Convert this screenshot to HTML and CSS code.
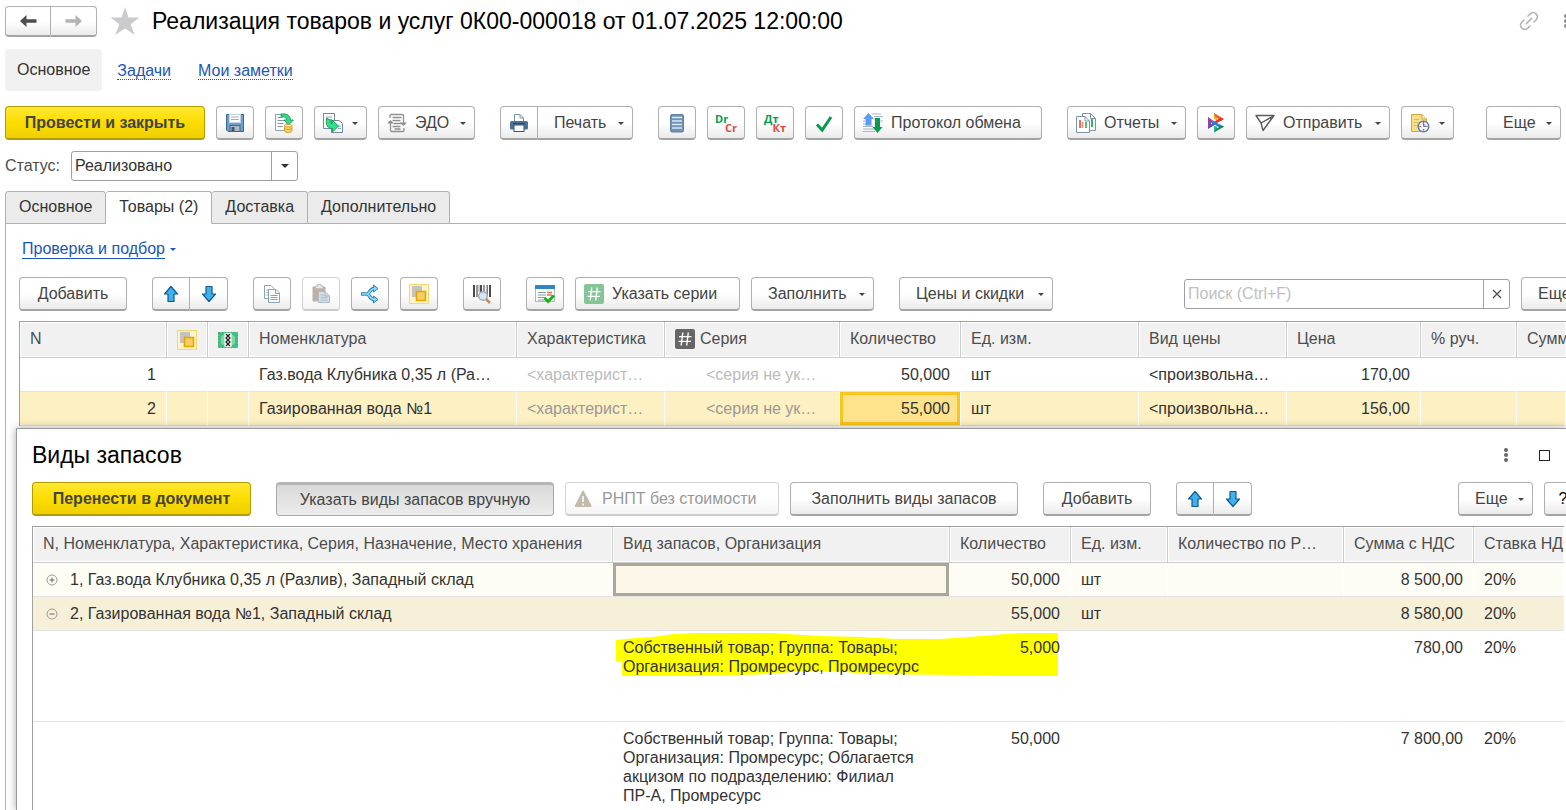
FILE: index.html
```html
<!DOCTYPE html>
<html lang="ru">
<head>
    <meta charset="UTF-8">
    <meta name="viewport" content="width=device-width, initial-scale=1.0">
    <title>Реализация товаров и услуг</title>
    <link rel="stylesheet" href="styles.css">
</head>
<body>
    <!-- shared icons -->
    <svg class="sprite" aria-hidden="true">
        <symbol id="i-up" viewBox="0 0 20 20">
            <path d="M10 2.5 L16.5 10 H13 V17.5 H7 V10 H3.5 Z" fill="#41b0ee" stroke="#0c5c94" stroke-width="1.2" stroke-linejoin="round"/>
        </symbol>
        <symbol id="i-down" viewBox="0 0 20 20">
            <path d="M10 17.5 L16.5 10 H13 V2.5 H7 V10 H3.5 Z" fill="#41b0ee" stroke="#0c5c94" stroke-width="1.2" stroke-linejoin="round"/>
        </symbol>
        <symbol id="i-stock" viewBox="0 0 20 20">
            <rect x=".5" y=".5" width="19" height="19" fill="#fff3c9" stroke="#f2d777"/>
            <path d="M3 2h10v5H8v6H3z" fill="#c3c3c3"/>
            <rect x="7.5" y="7.5" width="9" height="9" fill="#f7cd65" stroke="#e0a800" stroke-width="1.6"/>
        </symbol>
        <symbol id="i-hash" viewBox="0 0 20 20">
            <path d="M7.8 3.5 L6.2 16.5 M13.3 3.5 L11.7 16.5 M4 7.6 H16.5 M3.5 12.4 H16" fill="none" stroke="#fff" stroke-width="1.4"/>
        </symbol>
    </svg>

    <main class="page">
        <header class="title-bar">
            <div class="btn-group nav-group">
                <button class="btn" type="button" aria-label="Назад">
                    <svg width="18" height="14" viewBox="0 0 18 14"><path d="M7.5 1 L1 7 L7.5 13 V8.8 H17.5 V5.2 H7.5 Z" fill="#4d4d4d"/></svg>
                </button>
                <button class="btn" type="button" aria-label="Вперед">
                    <svg width="18" height="14" viewBox="0 0 18 14"><path d="M10.5 1 L17 7 L10.5 13 V8.8 H.5 V5.2 H10.5 Z" fill="#b3b3b3"/></svg>
                </button>
            </div>
            <button class="icon-btn star" type="button" aria-label="Избранное">
                <svg width="30" height="29" viewBox="0 0 30 29"><path d="M15 0 L18.5 10.5 H29.5 L20.7 17.2 L24.8 28 L15 21.4 L5.2 28 L9.3 17.2 L.5 10.5 H11.5 Z" fill="#cbcbcd"/></svg>
            </button>
            <h1>Реализация товаров и услуг 0К00-000018 от 01.07.2025 12:00:00</h1>
            <button class="icon-btn link-btn" type="button" aria-label="Ссылка">
                <svg width="20" height="20" viewBox="0 0 20 20" fill="none" stroke="#b5b5b5" stroke-width="1.600" stroke-linecap="round"><path d="M9 5 L11.5 2.6 A4.2 4.2 0 0 1 17.4 8.5 L15 11 M11 15 L8.500 17.4 A4.2 4.2 0 0 1 2.6 11.5 L5 9 M7.4 12.6 L12.6 7.4"/></svg>
            </button>
            <button class="icon-btn" type="button" aria-label="Меню">
                <svg width="6" height="16" viewBox="0 0 6 16" fill="#8a8a8a"><circle cx="3" cy="3" r="2"/><circle cx="3" cy="8" r="2"/><circle cx="3" cy="13" r="2"/></svg>
            </button>
        </header>

        <nav class="form-nav">
            <a class="current" href="#main">Основное</a>
            <a href="#tasks"><span>Задачи</span></a>
            <a href="#notes"><span>Мои заметки</span></a>
        </nav>

        <div class="toolbar">
            <button class="btn primary w-200" type="button">Провести и закрыть</button>
            <button class="btn icon" type="button" aria-label="Записать">
                <svg width="20" height="20" viewBox="0 0 20 20"><path d="M1.5 1.5 H18.5 V18.5 H3 L1.5 17 Z" fill="#6f9fd0" stroke="#3e6690"/><rect x="4.5" y="1.5" width="11" height="8" fill="#fff" stroke="#c2d4e6"/><path d="M6 4h8M6 6.500h8" stroke="#9fb0c0"/><rect x="5" y="12.500" width="10" height="6" fill="#aebac2" stroke="#4b6680"/><rect x="6.500" y="14" width="3" height="4" fill="#3e5a74"/></svg>
            </button>
            <button class="btn icon" type="button" aria-label="Провести">
                <svg width="20" height="20" viewBox="0 0 20 20"><path d="M1.500 1.500 H13 V17.500 H1.500 Z" fill="#fff" stroke="#8ba0b5"/><path d="M3.500 4.500h5M3.500 7.500h7M3.500 10.500h6M3.500 13.500h5" stroke="#7f97ad"/><path d="M7 1 C13 0 16.500 3 16.500 7 H19.500 L14.500 12 L10 7 H12.500 C12.500 4.500 10.500 3.500 7 3.800 Z" fill="#35d886" stroke="#139a58" stroke-width=".8"/><path d="M10.500 12.500 V18 C11 20 17.500 20 18 18 V12.500" fill="#f7d35c" stroke="#c9962a" stroke-width=".8"/><ellipse cx="14.200" cy="12.800" rx="3.800" ry="1.300" fill="#fde89a" stroke="#c9962a" stroke-width=".8"/><path d="M10.500 15.500 C12 17 16.500 17 18 15.500" fill="none" stroke="#c9962a" stroke-width=".8"/></svg>
            </button>
            <button class="btn with-icon w-53" type="button" aria-label="Создать на основании">
                <svg width="20" height="20" viewBox="0 0 20 20"><path d="M.5 .5 H11.500 V15.500 H.5 Z" fill="#fff" stroke="#71889e"/><path d="M3 4h6M3 6.500h6" stroke="#91a6b9"/><path d="M8.500 7.500 H16 L19.500 10.500 V19.500 H8.500 Z" fill="#fff" stroke="#71889e"/><path d="M15 13h3M15 15.500h3" stroke="#91a6b9"/><path d="M3.500 5 L7.500 7.500 C6.500 10 7.500 10.500 9 10.500 V7 L15.500 13 L9.500 19 V15.500 C4.500 15.500 2.500 12 3.500 5 Z" fill="#30e08a" stroke="#109455" stroke-width=".9"/></svg>
                <span class="caret"></span>
            </button>
            <button class="btn with-icon w-97" type="button">
                <svg width="20" height="20" viewBox="0 0 20 20" fill="none" stroke="#8f8f8f" stroke-width="1.300"><path d="M3 5 V2.500 Q3 1.500 4 1.500 H15 Q16.500 1.500 16.500 3 V10 M17 15 V17.500 Q17 18.500 16 18.500 H5 Q3.500 18.500 3.500 17 V10 M5.500 4.500h9M5.500 7.500h8M6.500 10.500h8M5.500 13.500h8M7.500 16h6"/><path d="M0 10.500 L3.500 7 L7 10.500 Z M13 9.500 L16.500 13 L20 9.500 Z" fill="#8f8f8f" stroke="none"/></svg>
                <span>ЭДО</span><span class="caret"></span>
            </button>

            <div class="btn-group gap-left">
                <button class="btn icon" type="button" aria-label="Печать">
                    <svg width="20" height="20" viewBox="0 0 20 20"><path d="M5.500 8 V1.500 H11 L14.500 5 V8" fill="#fff" stroke="#7b93ad"/><path d="M11 1.500 V5 H14.500" fill="none" stroke="#7b93ad"/><rect x="1" y="8" width="18" height="8.500" rx="1.500" fill="#4d7198"/><path d="M4 10.500 H16" stroke="#2c4866"/><rect x="5" y="12" width="10" height="6.500" fill="#fff" stroke="#345476"/></svg>
                </button>
                <button class="btn menu w-95" type="button"><span>Печать</span><span class="caret"></span></button>
            </div>

            <button class="btn icon gap-left" type="button" aria-label="Реестр">
                <svg width="20" height="20" viewBox="0 0 20 20"><rect x="3.500" y="1.500" width="13" height="17.500" rx="1.500" fill="#6f93b3" stroke="#5f82a0"/><path d="M5 4.500h10M5 8h10M5 11.500h10M5 15h10" stroke="#d7e7f3" stroke-width="1.600"/></svg>
            </button>
            <button class="btn icon" type="button" aria-label="Проводки">
                <span class="entry"><b>Dr</b><b>Cr</b></span>
            </button>
            <button class="btn icon" type="button" aria-label="Движения">
                <span class="entry"><b>Дт</b><b>Кт</b></span>
            </button>
            <button class="btn icon" type="button" aria-label="Проверить">
                <svg width="20" height="20" viewBox="0 0 20 20"><path d="M3 11.500 L8.200 17 L17 4" fill="none" stroke="#0a9a4c" stroke-width="3"/></svg>
            </button>
            <button class="btn with-icon w-188" type="button">
                <svg width="20" height="20" viewBox="0 0 20 20"><path d="M9 1h9M11 3.500h9M11 6h2M0 8h2M0 11h3M0 13.500h10M0 16h11M0 18.500h12M17 8h3" stroke="#a5b5c5"/><path d="M5.500 0 L11 6 H8.500 V12.500 H2.500 V6 H0 Z" fill="#5b9cf5"/><path d="M14.500 20 L9.500 14 H12 V5 H17 V14 H19.500 Z" fill="#0a9a4c"/></svg>
                <span>Протокол обмена</span>
            </button>

            <button class="btn with-icon w-119 gap-left" type="button">
                <svg width="20" height="20" viewBox="0 0 20 20"><path d="M6.500 .5 H14.500 L19.500 5.500 V17.500 H6.500 Z" fill="#f7fafc" stroke="#7d93a8"/><path d="M14.500 .5 V5.500 H19.500" fill="none" stroke="#7d93a8"/><path d="M16 6 V14" stroke="#36b26b" stroke-width="2"/><path d="M.5 3.500 H9 L13.500 8 V19.500 H.5 Z" fill="#fff" stroke="#7d93a8"/><path d="M9 3.500 V8 H13.500" fill="none" stroke="#7d93a8"/><path d="M4 7 V15" stroke="#e34a3a" stroke-width="1.600"/><path d="M6.500 9 V15" stroke="#f08b7d" stroke-width="1.600"/><path d="M10 9 V15" stroke="#2faa5c" stroke-width="1.600"/></svg>
                <span>Отчеты</span><span class="caret"></span>
            </button>
            <button class="btn icon" type="button" aria-label="Бизнес-сеть">
                <svg width="20" height="20" viewBox="0 0 20 20"><path d="M8 0 V5.500 L11 7.500 V4 Z" fill="#f5a623"/><path d="M8 0 L18 6 L15 8 L9 3 Z" fill="#ee5a2c"/><path d="M18 6 L9 11 L7 9.500 L14 5 Z" fill="#e8312f"/><path d="M2 4 V16 L5 13 V7 Z" fill="#8547a8"/><path d="M2 4 L9 9 L7 11 L3.500 8 Z" fill="#d5307e"/><path d="M2 16 L11 10.500 L9 8.500 L4 12 Z" fill="#5a4fc0"/><path d="M6 7.500 L18 13.500 L15 15.500 L6 10 Z" fill="#1f86d8"/><path d="M8 13 V19.500 L11 16.500 V13.500 Z" fill="#26b0a0"/><path d="M8 19.500 L18 13.500 L15 13 L10 16 Z" fill="#168c3c"/></svg>
            </button>
            <button class="btn with-icon w-144" type="button">
                <svg width="20" height="20" viewBox="0 0 20 20" fill="none" stroke="#5c5c5c" stroke-width="1.400" stroke-linejoin="round"><path d="M1 2.500 H19 L8 17.500 L6 10 Z M6 10 L18.500 3"/></svg>
                <span>Отправить</span><span class="caret"></span>
            </button>
            <button class="btn with-icon w-53" type="button" aria-label="Напоминание">
                <svg width="20" height="20" viewBox="0 0 20 20"><path d="M1.500 1.500 H12 L16.500 6 V18.500 H1.500 Z" fill="#f8df85" stroke="#cda84a"/><path d="M12 1.500 V6 H16.500" fill="#fff0ba" stroke="#cda84a"/><path d="M4 6.500h5M4 9.500h6M4 12.500h4" stroke="#dcb95c"/><circle cx="13.500" cy="13.500" r="5.300" fill="#fff" stroke="#5d83ad" stroke-width="1.500"/><path d="M13.500 9.500 V13.500 H16.500" fill="#9cb9d6" stroke="#5d83ad"/><path d="M13.500 17.500v-1.500M9.500 13.500h1.500M13.500 9v1M17.500 13.500h-1" stroke="#e34848" stroke-width="1.400"/></svg>
                <span class="caret"></span>
            </button>
            <button class="btn menu more" type="button"><span>Еще</span><span class="caret"></span></button>
        </div>

        <div class="status-row">
            <label for="status">Статус:</label>
            <div class="field status-field">
                <select id="status">
                    <option>Реализовано</option>
                </select>
                <span class="field-btn"><span class="caret"></span></span>
            </div>
        </div>

        <div class="tabs" role="tablist">
            <button type="button" role="tab">Основное</button>
            <button class="active" type="button" role="tab" aria-selected="true">Товары (2)</button>
            <button type="button" role="tab">Доставка</button>
            <button type="button" role="tab">Дополнительно</button>
        </div>

        <section class="tab-panel">
            <div class="check-row">
                <a href="#check">Проверка и подбор</a><span class="caret"></span>
            </div>

            <div class="toolbar">
                <button class="btn w-108" type="button">Добавить</button>
                <div class="btn-group gap-left">
                    <button class="btn icon" type="button" aria-label="Вверх"><svg width="20" height="20"><use href="#i-up"/></svg></button>
                    <button class="btn icon" type="button" aria-label="Вниз"><svg width="20" height="20"><use href="#i-down"/></svg></button>
                </div>
                <button class="btn icon gap-left" type="button" aria-label="Копировать">
                    <svg width="20" height="20" viewBox="0 0 20 20" stroke="#86a5b8"><path d="M2.500 1.500 H9 L12 4.500 V14.500 H2.500 Z" fill="#fff"/><path d="M4.500 6h4M4.500 8.500h2M4.500 11h2"/><path d="M6.500 5.500 H14 L17.500 9 V18.500 H6.500 Z" fill="#fff"/><path d="M13.500 5.500 V9.500 H17.500" fill="none"/><path d="M8.500 11.500h7M8.500 13.500h7M8.500 15.500h7"/></svg>
                </button>
                <button class="btn icon" type="button" aria-label="Вставить" disabled>
                    <svg width="20" height="20" viewBox="0 0 20 20"><rect x="1.500" y="2.500" width="13" height="15" rx="1" fill="#8f6d60"/><path d="M4.500 4.500 V2 H6.500 V.5 H10 V2 H12 V4.500 Z" fill="#d8d3d0" stroke="#8b8b8b"/><path d="M7.500 7.500 H14 L18.500 12 V18.500 H7.500 Z" fill="#b4c3d4" stroke="#6d8299"/><path d="M9.500 11h4M9.500 13.500h7M9.500 16h7M14 7.500 V12 H18.500" fill="none" stroke="#6d8299"/></svg>
                </button>
                <button class="btn icon" type="button" aria-label="Разбить строку">
                    <svg width="20" height="20" viewBox="0 0 20 20" fill="none"><path d="M1 10 H7 M7 10 C10 10 9 4.500 14.500 4.500 M7 10 C10 10 9 15.500 14.500 15.500" stroke="#2d86b8" stroke-width="3.600"/><path d="M13.500 1 L18 4.500 L13.500 8 Z M13.500 12 L18 15.500 L13.500 19 Z" fill="#7fd0f2" stroke="#2d86b8"/><path d="M2 10 H7 M7 10 C10 10 9 4.500 15.500 4.500 M7 10 C10 10 9 15.500 15.500 15.500" stroke="#8fdcfa" stroke-width="1.600"/></svg>
                </button>
                <button class="btn icon" type="button" aria-label="Запасы"><svg width="20" height="20"><use href="#i-stock"/></svg></button>
                <button class="btn icon gap-left" type="button" aria-label="Штрихкод">
                    <svg width="20" height="20" viewBox="0 0 20 20"><path d="M2 1 V13 M18 1 V13 M9 1 V9" stroke="#4b4b4b" stroke-width="2"/><path d="M5 1 V13 M12 1 V9 M15.200 1 V12" stroke="#777" stroke-width="1.500"/><path d="M7 1 V8" stroke="#999"/><circle cx="11" cy="12" r="4.300" fill="#d5e7f8" stroke="#a6adb8" stroke-width="1.400"/><path d="M14 15 L18 19" stroke="#c78c5c" stroke-width="2.600"/></svg>
                </button>
                <button class="btn icon gap-left" type="button" aria-label="Проверка серий">
                    <svg width="20" height="20" viewBox="0 0 20 20"><rect x=".5" y="1.500" width="19" height="16" fill="#fff" stroke="#aeb9c2"/><rect width="20" height="4" y="1" fill="#3285c5"/><path d="M3 8.500h8M3 11h8M3 13.500h7M3 16h6" stroke="#8b98a3"/><path d="M12 8.500h5M12 11h5" stroke="#ee6b5b" stroke-width="1.300"/><path d="M9.500 14 L13 17.500 L19 11.500" fill="none" stroke="#13b313" stroke-width="3"/></svg>
                </button>
                <button class="btn with-icon w-165" type="button">
                    <svg class="hash green" width="20" height="20"><use href="#i-hash"/></svg>
                    <span>Указать серии</span>
                </button>
                <button class="btn menu w-123" type="button"><span>Заполнить</span><span class="caret"></span></button>
                <button class="btn menu w-154 gap-left" type="button"><span>Цены и скидки</span><span class="caret"></span></button>
                <div class="field search">
                    <input type="text" placeholder="Поиск (Ctrl+F)" aria-label="Поиск">
                    <button class="field-btn" type="button" aria-label="Очистить">
                        <svg width="10" height="10" viewBox="0 0 10 10"><path d="M1 1 L9 9 M9 1 L1 9" stroke="#4d4d4d" stroke-width="1.300"/></svg>
                    </button>
                </div>
                <button class="btn menu" type="button"><span>Еще</span><span class="caret"></span></button>
            </div>

            <table class="grid goods">
                <colgroup>
                    <col class="c-n"><col class="c-icon"><col class="c-icon"><col class="c-name"><col class="c-char"><col class="c-series"><col class="c-qty"><col class="c-unit"><col class="c-kind"><col class="c-price"><col class="c-pct"><col>
                </colgroup>
                <thead>
                    <tr>
                        <th>N</th>
                        <th class="pic"><svg width="20" height="20"><use href="#i-stock"/></svg></th>
                        <th class="pic">
                            <svg width="20" height="16" viewBox="0 0 20 16"><rect x=".5" y=".5" width="19" height="15" fill="#3fbf7d" stroke="#35a86c" stroke-dasharray="2 1"/><rect x="3" y="3" width="14" height="10" rx="3" fill="#7bdba8"/><rect x="6.500" y="1" width="7" height="14" fill="#fff"/><path d="M8 2 L12 6 L8 10 L12 14 M12 2 L8 6 L12 10 L8 14" fill="none" stroke="#222" stroke-width="1.300"/></svg>
                        </th>
                        <th>Номенклатура</th>
                        <th>Характеристика</th>
                        <th><span class="th-icon"><svg class="hash" width="20" height="20"><use href="#i-hash"/></svg>Серия</span></th>
                        <th>Количество</th>
                        <th>Ед. изм.</th>
                        <th>Вид цены</th>
                        <th>Цена</th>
                        <th>% руч.</th>
                        <th class="cut">Сумма</th>
                    </tr>
                </thead>
                <tbody>
                    <tr>
                        <td class="num">1</td><td></td><td></td>
                        <td>Газ.вода Клубника 0,35 л (Ра…</td>
                        <td class="muted">&lt;характерист…</td>
                        <td class="muted shifted">&lt;серия не ук…</td>
                        <td class="num">50,000</td>
                        <td>шт</td>
                        <td>&lt;произвольна…</td>
                        <td class="num">170,00</td>
                        <td></td><td></td>
                    </tr>
                    <tr class="selected">
                        <td class="num">2</td><td></td><td></td>
                        <td>Газированная вода №1</td>
                        <td class="muted">&lt;характерист…</td>
                        <td class="muted shifted">&lt;серия не ук…</td>
                        <td class="num active-cell">55,000</td>
                        <td>шт</td>
                        <td>&lt;произвольна…</td>
                        <td class="num">156,00</td>
                        <td></td><td></td>
                    </tr>
                </tbody>
            </table>
        </section>
    </main>

    <section class="dialog" role="dialog" aria-labelledby="dialog-title">
        <header class="dialog-head">
            <h2 id="dialog-title">Виды запасов</h2>
            <button class="icon-btn" type="button" aria-label="Меню">
                <svg width="6" height="16" viewBox="0 0 6 16" fill="#666"><circle cx="3" cy="3" r="2"/><circle cx="3" cy="8" r="2"/><circle cx="3" cy="13" r="2"/></svg>
            </button>
            <button class="icon-btn" type="button" aria-label="Развернуть">
                <svg width="11" height="11" viewBox="0 0 11 11"><rect x=".5" y=".5" width="10" height="10" fill="#fff" stroke="#222"/></svg>
            </button>
        </header>

        <div class="toolbar">
            <button class="btn primary w-219" type="button">Перенести в документ</button>
            <button class="btn pressed w-278 gap-left" type="button" aria-pressed="true">Указать виды запасов вручную</button>
            <button class="btn with-icon w-214" type="button" disabled>
                <svg width="20" height="20" viewBox="0 0 20 20"><path d="M8 2.500 Q9 .5 10 2.500 L17.500 16.500 Q18 18 16.500 18 H1.500 Q.5 18 1 16.500 Z" fill="#8f8763"/><path d="M9 7 V13 M9 14.500 V16.500" stroke="#dcdcf0" stroke-width="2"/></svg>
                <span>РНПТ без стоимости</span>
            </button>
            <button class="btn w-228" type="button">Заполнить виды запасов</button>
            <button class="btn w-108 gap-left" type="button">Добавить</button>
            <div class="btn-group gap-left">
                <button class="btn icon" type="button" aria-label="Вверх"><svg width="20" height="20"><use href="#i-up"/></svg></button>
                <button class="btn icon" type="button" aria-label="Вниз"><svg width="20" height="20"><use href="#i-down"/></svg></button>
            </div>
            <button class="btn menu more" type="button"><span>Еще</span><span class="caret"></span></button>
            <button class="btn icon help" type="button">?</button>
        </div>

        <table class="grid stock">
            <colgroup>
                <col class="s-name"><col class="s-kind"><col class="s-qty"><col class="s-unit"><col class="s-rnpt"><col class="s-sum"><col>
            </colgroup>
            <thead>
                <tr>
                    <th>N, Номенклатура, Характеристика, Серия, Назначение, Место хранения</th>
                    <th>Вид запасов, Организация</th>
                    <th>Количество</th>
                    <th>Ед. изм.</th>
                    <th>Количество по Р…</th>
                    <th>Сумма с НДС</th>
                    <th class="cut">Ставка НДС</th>
                </tr>
            </thead>
            <tbody>
                <tr class="pale">
                    <td>
                        <span class="tree"><svg width="12" height="12" viewBox="0 0 12 12" fill="none" stroke="#9a9a9a"><circle cx="6" cy="6" r="5"/><path d="M3.500 6h5M6 3.500v5" stroke="#666"/></svg>1, Газ.вода Клубника 0,35 л (Разлив), Западный склад</span>
                    </td>
                    <td class="focus-cell"></td>
                    <td class="num">50,000</td>
                    <td>шт</td>
                    <td></td>
                    <td class="num">8 500,00</td>
                    <td>20%</td>
                </tr>
                <tr class="group">
                    <td>
                        <span class="tree"><svg width="12" height="12" viewBox="0 0 12 12" fill="none" stroke="#9a9a9a"><circle cx="6" cy="6" r="5"/><path d="M3.500 6h5" stroke="#666"/></svg>2, Газированная вода №1, Западный склад</span>
                    </td>
                    <td></td>
                    <td class="num">55,000</td>
                    <td>шт</td>
                    <td></td>
                    <td class="num">8 580,00</td>
                    <td>20%</td>
                </tr>
                <tr class="detail">
                    <td></td>
                    <td class="marked">
                        <!-- marker stroke over the kind and quantity cells -->
                        <svg class="marker" width="442" height="43" viewBox="0 0 442 43"><path d="M0 7 L20 5 L36 4 L58 1 L80 0 H156 L203 3 L245 4 L281 6 H324 L353 4 L390 1 L404 0 H442 V43 H388 L342 42 L249 41 L220 38 H188 L153 41 L84 43 H6 V28 H0 Z" fill="#ff0"/><path d="M411 22.500 H442" stroke="#fff"/></svg>
                        <span class="wrap">Собственный товар; Группа: Товары; Организация: Промресурс, Промресурс</span>
                    </td>
                    <td class="num"><span class="wrap">5,000</span></td>
                    <td></td>
                    <td></td>
                    <td class="num">780,00</td>
                    <td>20%</td>
                </tr>
                <tr class="detail">
                    <td></td>
                    <td><span class="wrap">Собственный товар; Группа: Товары; Организация: Промресурс; Облагается акцизом по подразделению: Филиал <span class="nowrap">ПР-А</span>, Промресурс</span></td>
                    <td class="num">50,000</td>
                    <td></td>
                    <td></td>
                    <td class="num">7 800,00</td>
                    <td>20%</td>
                </tr>
            </tbody>
        </table>
    </section>
</body>
</html>
```
FILE: styles.css
```css
* {
    box-sizing: border-box;
    margin: 0;
    padding: 0;
}

body {
    position: relative;
    height: 100vh;
    overflow: hidden;
    background: #fff;
    color: #333;
    font-family: "Liberation Sans", Arial, sans-serif;
    font-size: 16px;
    line-height: 19px;
}

button,
input,
select {
    font: inherit;
    color: inherit;
}

button {
    cursor: pointer;
}

.sprite {
    display: none;
}

.page {
    display: flex;
    flex-direction: column;
    height: 100vh;
    padding-left: 5px;
}

h1,
h2 {
    color: #000;
    font-size: 23px;
    font-weight: normal;
    line-height: 28px;
    white-space: nowrap;
}

/* Title */
.title-bar {
    display: flex;
    align-items: center;
    height: 42px;
}

.title-bar h1 {
    flex: 1;
    margin-left: 12px;
}

.icon-btn {
    display: flex;
    border: none;
    background: none;
}

.star {
    margin-left: 13px;
}

.link-btn {
    margin-right: 24px;
}

.title-bar > .icon-btn:last-child {
    margin-right: -3px;
}

.form-nav {
    display: flex;
    align-items: center;
    gap: 27px;
    height: 42px;
    margin-top: 7px;
}

.form-nav a {
    color: #1a56b8;
    text-decoration: none;
}

.form-nav a span {
    border-bottom: 1px dotted #1a56b8;
}

.form-nav .current {
    padding: 11px 12px 12px;
    margin-right: -12px;
    border-radius: 4px;
    background: #f1f1f1;
    color: #333;
}

/* Buttons */
.toolbar {
    display: flex;
    align-items: center;
    gap: 11px;
}

.page > .toolbar {
    margin-top: 15px;
    padding-right: 5px;
}

.btn {
    display: flex;
    flex: none;
    align-items: center;
    justify-content: center;
    height: 34px;
    padding: 0 16px;
    border: 1px solid #b0b0b0;
    border-bottom: 2px solid #a3a3a3;
    border-radius: 4px;
    background: linear-gradient(#fff 50%, #ebebeb);
    color: #444;
    white-space: nowrap;
}

.btn.icon {
    width: 38px;
    padding: 0;
}

.btn.with-icon {
    justify-content: flex-start;
    gap: 8px;
    padding: 0 8px;
}

.btn.menu {
    justify-content: flex-start;
    min-width: 75px;
    padding-right: 8px;
}

.btn:disabled {
    opacity: 0.55;
}

.btn.primary {
    border-color: #b39b00;
    background: linear-gradient(#ffe733, #fddd00 50%, #efcf00);
    font-weight: bold;
}

.btn.pressed {
    padding-bottom: 2px;
    border: 1px solid #a8a8a8;
    border-top: 3px solid #b5b5b5;
    background: linear-gradient(#d9d9d9, #ececec);
}

.btn.help {
    margin-right: -18px;
    color: #000;
}

/* Button widths */
.w-53 { min-width: 53px; }
.btn.w-95 { min-width: 95px; }
.w-97 { min-width: 97px; }
.w-108 { min-width: 108px; }
.w-119 { min-width: 119px; }
.btn.w-123 { min-width: 123px; }
.w-144 { min-width: 144px; }
.btn.w-154 { min-width: 154px; }
.w-165 { min-width: 165px; }
.w-188 { min-width: 188px; }
.w-200 { min-width: 200px; }
.w-214 { min-width: 214px; }
.w-219 { min-width: 219px; }
.w-228 { min-width: 228px; }
.w-278 { min-width: 278px; }

.caret {
    width: 0;
    height: 0;
    border: 3px solid transparent;
    border-top-color: currentColor;
    border-bottom: none;
}

.btn .caret {
    margin-top: 2px;
    margin-left: auto;
}

.btn-group {
    display: flex;
    flex: none;
}

.btn-group .btn:first-child {
    border-radius: 4px 0 0 4px;
}

.btn-group .btn:last-child {
    border-left: none;
    border-radius: 0 4px 4px 0;
}

.nav-group .btn {
    width: 46px;
    height: 31px;
    padding: 0;
}

.gap-left {
    margin-left: 14px;
}

.more {
    margin-left: auto;
}

/* Two-letter debit/credit marks, set on a diagonal */
.entry {
    display: flex;
    flex-direction: column;
    width: 22px;
    color: #0a9a4c;
    font-family: "Open Sans", sans-serif;
    font-size: 11px;
    line-height: 9px;
    text-align: left;
}

.entry b:last-child {
    color: #e04848;
    text-align: right;
}

.hash {
    border-radius: 2px;
    background: #666;
}

.hash.green {
    background: #84c595;
}

/* Fields */
.status-row {
    display: flex;
    align-items: center;
    margin-top: 11px;
    color: #4d4d4d;
}

.status-row label {
    min-width: 66px;
    padding-bottom: 2px;
}

.field {
    display: flex;
    height: 30px;
    border: 1px solid #a0a0a0;
    border-radius: 3px;
    background: #fff;
    color: #333;
}

.field select,
.field input {
    flex: 1;
    min-width: 0;
    padding: 0 3px 2px;
    border: none;
    outline: none;
    background: none;
    appearance: none;
}

.field-btn {
    display: flex;
    align-items: center;
    justify-content: center;
    width: 26px;
    border: none;
    border-left: 1px solid #a0a0a0;
    background: none;
}

.field-btn .caret {
    border-width: 4px 4px 0;
}

.status-field {
    width: 227px;
}

.search {
    width: 326px;
    margin-left: auto;
}

.search input::placeholder {
    color: #c0c0c0;
}

/* Tabs */
.tabs {
    display: flex;
    height: 33px;
    margin-top: 10px;
    border-bottom: 1px solid #b0b0b0;
}

.tabs button {
    height: 33px;
    padding: 0 13px 2px;
    border: 1px solid #b0b0b0;
    border-left: none;
    border-radius: 3px 3px 0 0;
    background: #ebebeb;
}

.tabs button:first-child {
    border-left: 1px solid #b0b0b0;
}

.tabs .active {
    border-bottom-color: #fff;
    background: #fff;
}

.tab-panel {
    flex: 1;
    padding: 15px 0 0 13px;
    border-left: 1px solid #b0b0b0;
}

.check-row {
    display: flex;
    align-items: center;
    gap: 5px;
    margin: 0 0 18px 3px;
    color: #1a56b8;
}

.check-row a {
    border-bottom: 1px solid #1a56b8;
    color: #1a56b8;
    text-decoration: none;
}

.tab-panel .toolbar {
    margin-bottom: 10px;
    margin-right: -30px;
}

/* Grids */
.grid {
    width: 100%;
    table-layout: fixed;
    border-collapse: separate;
    border-spacing: 0;
    border-top: 1px solid #a0a0a0;
    border-left: 1px solid #a0a0a0;
}

.grid th {
    height: 36px;
    padding: 0 10px 2px;
    border-right: 1px solid #ccc;
    border-bottom: 1px solid #ccc;
    background: #f1f1f1;
    box-shadow: inset 0 0 0 1px #fff;
    color: #4d4d4d;
    font-weight: normal;
    text-align: left;
    white-space: nowrap;
}

.grid th.pic {
    padding: 0;
    text-align: center;
}

.grid th.pic svg {
    display: block;
    margin: 0 auto;
}

.grid th.cut {
    overflow: hidden;
    border-right: none;
}

.th-icon {
    display: flex;
    align-items: center;
    gap: 5px;
}

.grid td {
    height: 34px;
    padding: 0 10px;
    border-right: 1px solid transparent;
    border-bottom: 1px solid #e3e3e3;
    white-space: nowrap;
}

.grid .num {
    text-align: right;
}

.grid .muted {
    color: #bbb;
}

.grid .shifted {
    padding-left: 41px;
}

.grid .selected td {
    border-right-color: #fff;
    background: #fdf0c3;
}

.grid .selected .muted {
    color: #999;
}

.grid .selected .active-cell {
    background: #fee28c;
    box-shadow: inset 0 0 0 3px #fac51c;
}

.c-n { width: 147px; }
.c-icon { width: 41px; }
.c-name { width: 268px; }
.c-char { width: 148px; }
.c-series { width: 175px; }
.c-qty { width: 121px; }
.c-unit { width: 178px; }
.c-kind { width: 148px; }
.c-price { width: 134px; }
.c-pct { width: 96px; }

/* Floating window */
.dialog {
    position: absolute;
    top: 428px;
    right: 0;
    bottom: 0;
    left: 16px;
    overflow: hidden;
    padding: 12px 2px 0 15px;
    border-top: 1px solid #999;
    border-left: 1px solid #999;
    background: #fff;
    box-shadow: 0 0 8px rgba(0, 0, 0, 0.35);
}

.dialog-head {
    display: flex;
    align-items: center;
    gap: 30px;
    margin-bottom: 13px;
    padding-right: 14px;
}

.dialog-head h2 {
    flex: 1;
}

.dialog .toolbar {
    margin-bottom: 10px;
}

.grid .pale td {
    border-right-color: #fff;
    background: #fefdf5;
}

.grid .group td {
    background: #f7f0d8;
}

.grid .pale .focus-cell {
    background: #fdf7ea;
    box-shadow: inset 0 0 0 3px #aba797;
}

.tree {
    display: flex;
    align-items: center;
    gap: 12px;
    padding-left: 3px;
}

.grid .detail td {
    height: 91px;
    padding-top: 7px;
    vertical-align: top;
    white-space: normal;
}

.grid .marked {
    position: relative;
}

.marker {
    position: absolute;
    top: 2px;
    left: 3px;
}

.wrap {
    position: relative;
    z-index: 1;
    display: block;
}

.nowrap {
    white-space: nowrap;
}

.s-name { width: 580px; }
.s-kind { width: 337px; }
.s-qty { width: 121px; }
.s-unit { width: 97px; }
.s-rnpt { width: 176px; }
.s-sum { width: 130px; }
```
